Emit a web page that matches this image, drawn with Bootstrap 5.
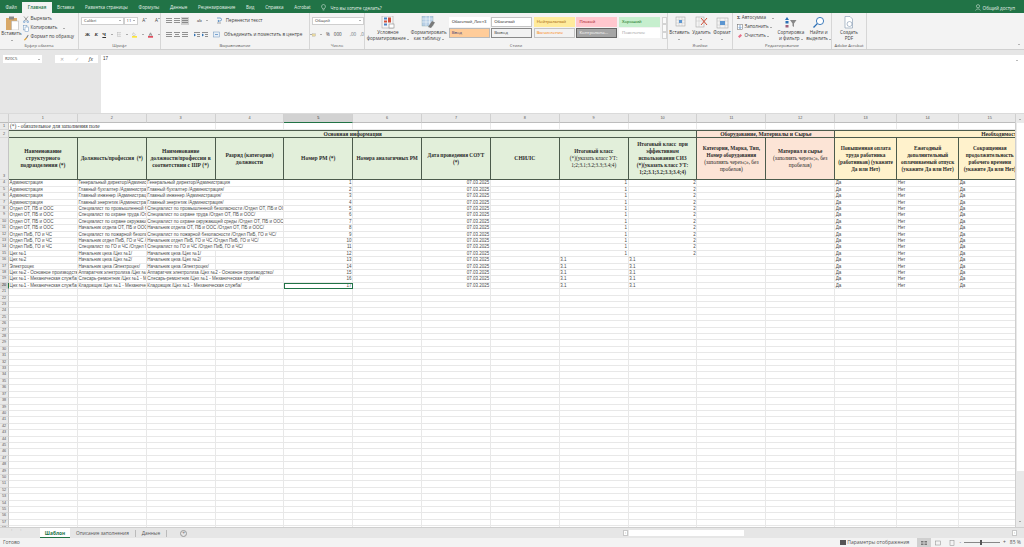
<!DOCTYPE html>
<html lang="ru">
<head>
<meta charset="utf-8">
<title>Excel</title>
<link href="https://cdn.jsdelivr.net/npm/bootstrap@5.3.0/dist/css/bootstrap.min.css" rel="stylesheet">
<style>
html,body{margin:0;height:100%;overflow:hidden;background:#e6e6e6}
body{font-family:"Open Sans","Noto Sans",sans-serif;font-size:4.6px;line-height:1.2;color:#3c3c3c}
.xl-app{width:1024px;height:547px;overflow:hidden}
.xl-top{height:13px;background:#217346;color:#e8f2ec;padding-top:2px}
.xl-tab{padding:0 5.4px;height:11px;line-height:10px;font-size:4.5px;white-space:nowrap}
.xl-tab.on{background:#f3f3f3;color:#217346;font-weight:600}
.xl-share{margin-left:auto;margin-right:9px;line-height:10px;gap:2px}
.xl-rib{height:37px;background:#f3f3f3;border-bottom:1px solid #d0d0d0}
.rg{flex:none;border-right:1px solid #d6d6d6;display:flex;flex-direction:column;height:36px}
.rg-b{flex:1;display:flex;min-height:0}
.rg-l{height:6px;line-height:6px;text-align:center;font-size:4.2px;color:#555;white-space:nowrap}
.w1{width:79px}.w2{width:82px}.w3{width:149px}.w4{width:55px}.w5{width:303px}.w6{width:65px}.w7{width:99px}.w8{width:35px}
.bigb{display:flex;flex-direction:column;align-items:center;text-align:center;line-height:6.4px;white-space:nowrap;padding-top:3px}
.bigb svg{flex:none}
.paste-b{width:23px}.cf-b{width:46px}.ft-b{width:36px}
.lcol{padding-top:1.5px}.lcol2{padding-top:.5px;padding-left:4px}
.ln{height:9px;display:flex;align-items:center;gap:1.5px;white-space:nowrap}
.ca{display:inline-block;width:0;height:0;border-left:1.2px solid transparent;border-right:1.2px solid transparent;border-top:1.6px solid #666;flex:none;vertical-align:middle}
.cu{display:inline-block;width:0;height:0;border-left:1.5px solid transparent;border-right:1.5px solid transparent;border-bottom:1.8px solid #777;flex:none}
.selbox{background:#fff;border:1px solid #cfcfcf;height:8px;display:flex;align-items:center;padding:0 2px;justify-content:space-between;font-size:4.2px}
.b-ico{font-family:"Liberation Serif",serif;font-weight:700;font-size:5px;color:#333}
.fnt1{width:44px}.fnt2{width:15px}
.sw{width:8px;height:8px;flex:none}
.sw.hl{background:#cfcfcf}
.cgrp{padding:3px 0 0 2px;flex-direction:column}
.rw{height:9px;display:flex;align-items:center;white-space:nowrap}
.rw2{margin-top:5px}
.sp6{gap:4.5px}
.gal{display:grid;grid-template-columns:repeat(5,41px);grid-auto-rows:10px;column-gap:1.6px;row-gap:1px;margin:4px 0 0 2px}
.gs{display:flex;align-items:center;padding-left:2px;font-size:4.3px;white-space:nowrap;overflow:hidden;border:1px solid transparent}
.gs0{background:#fff;color:#222}.gs1{background:#fff;border-color:#c4c4c4;color:#222}
.gs2{background:#ffeb9c;color:#9c5700}.gs3{background:#ffc7ce;color:#9c0006}.gs4{background:#c6efce;color:#006100}
.gs5{background:#ffcc99;color:#3f3f76;border-color:#b9b9b9}.gs6{background:#f2f2f2;color:#3f3f3f;border-color:#888}
.gs7{background:#f2f2f2;color:#fa7d00;border-color:#c4c4c4}.gs8{background:#a5a5a5;color:#fff;border-color:#666}
.gs9{background:#fff;color:#999}
.gal-sc{width:5px;margin:4px 0 0 2px;height:22px;display:flex;flex-direction:column}
.gal-sc i{flex:1;border:1px solid #d4d4d4;background:#fafafa;display:block}
.xl-fx{height:63px;background:#e6e6e6;padding-top:5px}
.nm{width:39px;height:8px;margin-left:3px;background:#fff;display:flex;justify-content:space-between;align-items:center;padding:0 2px;font-size:4.2px}
.fxb{width:43px;height:8px;margin-left:13px;background:#fff;display:flex;justify-content:space-around;align-items:center;color:#aaa;font-size:5px}
.fxi{flex:1;margin-left:3px;height:58px;background:#fff;padding:1px 2px;font-family:"Liberation Sans",sans-serif;font-size:4.5px;display:flex;justify-content:space-between;color:#333}
.xl-sheet{height:414px;background:#fff;overflow:hidden;border-top:1px solid #dadada}
.xl-clip{width:1015px;height:413px;overflow:hidden}
.xl-t.table{width:1021.2px;table-layout:fixed;border-collapse:separate;border-spacing:0;margin:0}
.xl-t.table>:not(caption)>*>*{padding:0 .6px;border:0;border-right:1px solid #e8e8e8;border-bottom:1px solid #e8e8e8;box-shadow:none;font-family:"Liberation Sans",sans-serif;font-size:4.5px;font-weight:400;line-height:5.4px;color:#4a4a4a;white-space:nowrap;overflow:hidden;background:#fff;vertical-align:bottom;height:6.42px}
.xl-t.table>:not(caption)>tr>.ch{background:#e9e9e9;text-align:center;color:#555;height:9.3px;line-height:8px;font-size:3.8px;border-right:1px solid #d0d0d0;border-bottom:1px solid #bdbdbd;vertical-align:middle}
.xl-t.table>:not(caption)>tr>.ch.act{background:#d2d2d2;border-bottom:1px solid #217346;color:#222}
.xl-t.table>:not(caption)>tr>.rh{background:#e9e9e9;text-align:center;padding:0;color:#555;font-size:3.8px;border-right:1px solid #c4c4c4;border-bottom:1px solid #d8d8d8}
.xl-t.table>:not(caption)>tr>.rh.act{background:#d2d2d2;border-right:1px solid #217346;color:#222}
.xl-t.table>:not(caption)>tr>.r{text-align:right}
.xl-t.table>:not(caption)>tr>.sel{outline:1px solid #217346;outline-offset:-1px}
.xl-t.table>:not(caption)>tr>.nt{font-family:"Liberation Serif",serif;font-size:5.4px;line-height:6px;color:#333;text-decoration:underline;padding-left:1px;height:6.2px}
.xl-t.table>:not(caption)>tr>.hd{font-family:"Liberation Serif",serif;font-weight:700;font-size:5.6px;line-height:7px;color:#2b2b2b;text-align:center;vertical-align:middle;border-right:1px solid #4c5b4c;border-bottom:1px solid #4c5b4c;padding:0}
.xl-t.table>:not(caption)>tr>.hd1{height:7.4px;line-height:6px;border-top:1px solid #4c5b4c}
.xl-t.table>:not(caption)>tr>.hd3{height:42px}
.xl-t.table>:not(caption)>tr>.hds{font-size:5.3px}
.xl-t.table>:not(caption)>tr>.grn{background:#e2efda}
.xl-t.table>:not(caption)>tr>.pnk{background:#fce4d6}
.xl-t.table>:not(caption)>tr>.ylw{background:#fff2cc}
.xl-t.table>:not(caption)>tr>.lft{text-align:left;padding-left:146px}
.nrm{font-weight:400;color:#222}
.cw0{width:9px}.cw1{width:68.85px}.cw2{width:62px}.cw3{width:62.2px}
.xl-vs{width:9px;height:413px;background:#e9e9e9;border-left:1px solid #cfcfcf;display:flex;flex-direction:column;align-items:center;justify-content:space-between;padding:5px 0}
.xl-vs i{display:block;width:7px;flex:1;margin:3px 0;background:linear-gradient(#fff 0 88%,#e9e9e9 88%)}
.xl-tabs{height:11px;background:#e6e6e6;border-top:1px solid #cfcfcf}
.st-nav{width:40px;gap:8px;padding-left:11px;color:#aaa;font-size:4px}
.st{padding:0 6px;line-height:10px;white-space:nowrap;font-size:4.8px;color:#555;border-right:1px solid #bbb;height:7px;margin-top:1.5px;display:flex;align-items:center}
.st.on{background:#fff;color:#217346;font-weight:700;border:0;border-bottom:1.5px solid #217346;height:10px;margin:0;width:30px;padding:0;justify-content:center}
.st-add{margin-left:13px;width:7px;height:7px;border:1px solid #999;border-radius:50%;line-height:4.4px;text-align:center;color:#777;margin-top:1.5px;font-size:5px}
.hs{margin-left:auto;width:401px;padding:1.5px 7px 0 0;gap:1px;font-size:3.5px;color:#666}
.hs u{display:block;width:5px;height:6px;background:#fff;border:1px solid #c8c8c8;text-align:center;line-height:4px;text-decoration:none;flex:none}
.hs b{display:block;width:115px;height:6px;background:#fff;flex:none}
.hs em{flex:1}
.xl-status{height:9px;background:#f3f3f3;line-height:9px;font-size:5px;padding:0 3px;color:#555}
.vw{width:14px;height:9px;display:flex;align-items:center;justify-content:center}
.vw.on{background:#d0d0d0}
.zbar{width:36px;height:1px;background:#888;position:relative;margin:0 3px}
.zthumb{position:absolute;left:16px;top:-2px;width:2px;height:5px;background:#555}
.st-par{margin:0 8px 0 1px}
.st-pct{margin-left:4px}
.fnd{margin-left:2px}
</style>
</head>
<body>
<svg width="0" height="0" class="d-none">
 <symbol id="al" viewBox="0 0 8 8"><path d="M1 1.500h6M1 3.500h6M1 5.500h6" stroke="#777" stroke-width=".8"/></symbol>
 <symbol id="ac" viewBox="0 0 8 8"><path d="M1 1.500h6M2 3.500h4M1 5.500h6" stroke="#777" stroke-width=".8"/></symbol>
 <symbol id="ind" viewBox="0 0 8 8"><path d="M1 1.500h6M4 3.500h3M4 5.500h3" stroke="#777" stroke-width=".8"/><path d="M1 2.500l2 1.500-2 1.500z" fill="#2b6fb5"/></symbol>
</svg>
<div class="xl-app d-flex flex-column">
 <div class="xl-top d-flex">
  <div class="nav flex-nowrap">
   <span class="xl-tab">Файл</span><span class="xl-tab on">Главная</span><span class="xl-tab">Вставка</span><span class="xl-tab">Разметка страницы</span><span class="xl-tab">Формулы</span><span class="xl-tab">Данные</span><span class="xl-tab">Рецензирование</span><span class="xl-tab">Вид</span><span class="xl-tab">Справка</span><span class="xl-tab">Acrobat</span>
   <span class="xl-tab d-flex align-items-center gap-1"><svg width="5" height="7" viewBox="0 0 5 7"><path d="M2.500.5a2 2 0 0 0-1 3.700V5h2v-.8a2 2 0 0 0-1-3.700zM1.700 6h1.600" fill="none" stroke="#e8f2ec" stroke-width=".5"/></svg>Что вы хотите сделать?</span>
  </div>
  <div class="xl-share d-flex align-items-center"><svg width="6" height="7" viewBox="0 0 6 7"><circle cx="3" cy="2.200" r="1.600" fill="none" stroke="#e8f2ec" stroke-width=".5"/><path d="M.6 6.500c.3-2 4.500-2 4.800 0" fill="none" stroke="#e8f2ec" stroke-width=".5"/></svg>Общий доступ</div>
 </div>

 <div class="xl-rib d-flex">
  <div class="rg w1">
   <div class="rg-b">
    <div class="bigb paste-b">
     <svg width="22" height="14" viewBox="0 0 22 14"><rect x="5" y="2" width="11" height="12" fill="#d8a868"/><rect x="8" y=".5" width="5" height="3" fill="#8a8a8a"/><rect x="10.500" y="5" width="7" height="9" fill="#fff" stroke="#aaa" stroke-width=".5"/></svg>
     <span>Вставить</span><span class="ca mt-1"></span>
    </div>
    <div class="d-flex flex-column lcol ms-0">
     <div class="ln"><svg width="6" height="7" viewBox="0 0 6 7"><path d="M1 .5l3.500 4.500M5 .5L1.500 5" stroke="#666" stroke-width=".6"/><circle cx="1.200" cy="5.700" r=".9" fill="none" stroke="#3d7cc0" stroke-width=".5"/><circle cx="4.800" cy="5.700" r=".9" fill="none" stroke="#3d7cc0" stroke-width=".5"/></svg>Вырезать</div>
     <div class="ln"><svg width="6" height="7" viewBox="0 0 6 7"><rect x=".5" y=".5" width="3.400" height="4.400" fill="#fff" stroke="#6b93bd" stroke-width=".5"/><rect x="2" y="2" width="3.400" height="4.400" fill="#fff" stroke="#6b93bd" stroke-width=".5"/></svg>Копировать <span class="ca ms-1"></span></div>
     <div class="ln"><svg width="6" height="7" viewBox="0 0 6 7"><path d="M.8 6l2.200-2.400 1 1L1.800 6.600z" fill="#e0a030"/><path d="M3 3.400l2-2.600.6.5-1.600 2.900z" fill="#777"/></svg>Формат по образцу</div>
    </div>
   </div>
   <div class="rg-l">Буфер обмена</div>
  </div>

  <div class="rg w2">
   <div class="rg-b cgrp">
    <div class="rw">
     <div class="selbox fnt1"><span>Calibri</span><span class="ca"></span></div>
     <div class="selbox fnt2"><span>11</span><span class="ca"></span></div>
     <span class="ms-1">A<span class="cu ms-0 align-top"></span></span><span class="ms-1 ps-1">A<span class="ca align-top"></span></span>
    </div>
    <div class="rw rw2 sp6 ps-1">
     <span class="b-ico">Ж</span><span class="b-ico fst-italic">К</span><span class="b-ico text-decoration-underline">Ч</span><span class="ca"></span>
     <svg width="7" height="7" viewBox="0 0 7 7"><rect x=".5" y=".5" width="6" height="6" fill="none" stroke="#aaa" stroke-width=".6"/><path d="M3.500.5v6M.5 3.500h6" stroke="#aaa" stroke-width=".4"/></svg><span class="ca"></span>
     <svg width="8" height="8" viewBox="0 0 8 8"><path d="M2 .5l3.500 3-2.500 2.500L1 3z" fill="#f6f6f6" stroke="#777" stroke-width=".5"/><rect y="6" width="8" height="2" fill="#ffe100"/></svg><span class="ca"></span>
     <svg width="8" height="8" viewBox="0 0 8 8"><path d="M1.500 5.500L4 .5l2.500 5M2.500 3.800h3" fill="none" stroke="#555" stroke-width=".8"/><rect y="6" width="8" height="2" fill="#d8132a"/></svg><span class="ca"></span>
    </div>
   </div>
   <div class="rg-l">Шрифт</div>
  </div>

  <div class="rg w3">
   <div class="rg-b cgrp ps-1">
    <div class="rw">
     <svg class="sw"><use href="#al"/></svg><svg class="sw"><use href="#al"/></svg><svg class="sw hl"><use href="#al"/></svg>
     <span class="ms-2 b-ico fw-normal">ab</span><span class="ca ms-1"></span>
     <span class="ms-2 d-flex align-items-center gap-1"><svg width="6" height="7" viewBox="0 0 6 7"><path d="M1 1h3a1.500 1.500 0 0 1 0 3H2M3 3L1.800 4 3 5" fill="none" stroke="#2b6fb5" stroke-width=".6"/><path d="M1 6h4" stroke="#777" stroke-width=".6"/></svg>Перенести текст</span>
    </div>
    <div class="rw rw2">
     <svg class="sw"><use href="#al"/></svg><svg class="sw"><use href="#ac"/></svg><svg class="sw"><use href="#al"/></svg>
     <svg class="sw ms-1"><use href="#ind"/></svg><svg class="sw"><use href="#ind"/></svg>
     <span class="ms-1 d-flex align-items-center gap-1"><svg width="7" height="7" viewBox="0 0 7 7"><rect x=".5" y="1" width="6" height="5" fill="#e9f0f7" stroke="#6b93bd" stroke-width=".5"/><path d="M2 3.500h3" stroke="#2b6fb5" stroke-width=".6"/></svg>Объединить и поместить в центре<span class="ca ms-1"></span></span>
    </div>
   </div>
   <div class="rg-l">Выравнивание</div>
  </div>

  <div class="rg w4">
   <div class="rg-b cgrp">
    <div class="rw"><div class="selbox flex-grow-1 me-0"><span>Общий</span><span class="ca"></span></div></div>
    <div class="rw rw2 gap-1"><svg width="7" height="6" viewBox="0 0 7 6"><rect y="1" width="6" height="4" fill="#e8d8a0" stroke="#888" stroke-width=".4"/></svg><span class="ca"></span><span>%</span><span>000</span><span class="ms-1 text-secondary">,00</span><span class="text-secondary">,0</span></div>
   </div>
   <div class="rg-l">Число</div>
  </div>

  <div class="rg w5">
   <div class="rg-b">
    <div class="bigb cf-b">
     <svg width="15" height="13" viewBox="0 0 15 13"><rect x="2" y="0" width="11" height="12" fill="#f6f6f6" stroke="#9a9a9a" stroke-width=".5"/><rect x="4" y="1.500" width="3" height="2" fill="#4a80c2"/><rect x="4" y="4.500" width="3" height="2" fill="#d0503a"/><rect x="4" y="7.500" width="3" height="2" fill="#4a80c2"/><rect x="8" y="1.500" width="3" height="5" fill="#d0503a"/><rect x="9" y="8" width="5" height="4" fill="#fff" stroke="#777" stroke-width=".5"/></svg>
     <span>Условное</span><span>форматирование <span class="ca"></span></span>
    </div>
    <div class="bigb ft-b">
     <svg width="15" height="13" viewBox="0 0 15 13"><rect x="1" y="0" width="11" height="10" fill="#b8cfe6" stroke="#8aa" stroke-width=".4"/><path d="M1 3h11M1 6h11M5 0v10M8.500 0v10" stroke="#fff" stroke-width=".5"/><path d="M7 11l4-6 3 1.500-4 5.500z" fill="#7a7a7a"/></svg>
     <span>Форматировать</span><span>как таблицу <span class="ca"></span></span>
    </div>
    <div class="gal">
     <div class="gs gs0">Обычный_Лист3</div><div class="gs gs1">Обычный</div><div class="gs gs2">Нейтральный</div><div class="gs gs3">Плохой</div><div class="gs gs4">Хороший</div>
     <div class="gs gs5">Ввод</div><div class="gs gs6">Вывод</div><div class="gs gs7">Вычисление</div><div class="gs gs8">Контрольна...</div><div class="gs gs9">Пояснение</div>
    </div>
    <div class="gal-sc"><i></i><i></i><i></i></div>
   </div>
   <div class="rg-l">Стили</div>
  </div>

  <div class="rg w6">
   <div class="rg-b justify-content-around">
    <div class="bigb"><svg width="13" height="13" viewBox="0 0 13 13"><rect x="3" y="1" width="9" height="9" fill="#f4f4f4" stroke="#9a9a9a" stroke-width=".5"/><path d="M6 1v9M9 1v9M3 4h9M3 7h9" stroke="#bbb" stroke-width=".4"/><rect x="6" y="4" width="3" height="3" fill="#5b95d0"/></svg><span>Вставить</span><span class="ca mt-1"></span></div>
    <div class="bigb"><svg width="13" height="13" viewBox="0 0 13 13"><rect x="1" y="1" width="8" height="10" fill="#f4f4f4" stroke="#9a9a9a" stroke-width=".5"/><path d="M4 1v10M1 5h8" stroke="#bbb" stroke-width=".4"/><path d="M6 2l6 7M12 2L6 9" stroke="#d0503a" stroke-width="1"/></svg><span>Удалить</span><span class="ca mt-1"></span></div>
    <div class="bigb"><svg width="13" height="13" viewBox="0 0 13 13"><rect x="1" y="2" width="11" height="10" fill="#f4f4f4" stroke="#9a9a9a" stroke-width=".5"/><path d="M4 2v10M9 2v10M1 5h11M1 9h11" stroke="#bbb" stroke-width=".4"/><rect x="4" y="5" width="5" height="4" fill="#5b95d0"/></svg><span>Формат</span><span class="ca mt-1"></span></div>
   </div>
   <div class="rg-l">Ячейки</div>
  </div>

  <div class="rg w7">
   <div class="rg-b">
    <div class="d-flex flex-column lcol2">
     <div class="ln"><span class="b-ico fw-bold">Σ</span>Автосумма <span class="ca ms-1"></span></div>
     <div class="ln"><svg width="6" height="6" viewBox="0 0 6 6"><rect x=".5" y=".5" width="5" height="5" fill="#fff" stroke="#666" stroke-width=".5"/><path d="M3 1v3.500M1.700 3.200L3 4.500l1.300-1.300" stroke="#2b6fb5" stroke-width=".6" fill="none"/></svg>Заполнить <span class="ca"></span></div>
     <div class="ln"><svg width="6" height="6" viewBox="0 0 6 6"><path d="M1 3.500L3.500 1l1.500 1.500L2.500 5z" fill="#e8708a"/></svg>Очистить <span class="ca"></span></div>
    </div>
    <div class="bigb ms-1"><svg width="13" height="13" viewBox="0 0 13 13"><path d="M3 1l2 3H1z" fill="#2b6fb5"/><rect x="1.500" y="5" width="3" height="2.500" fill="#2b6fb5"/><rect x="1.500" y="9" width="3" height="2.500" fill="#a0607a"/><path d="M6 4h6.500L10 7.500V11l-1.500-1V7.500z" fill="#888"/></svg><span>Сортировка</span><span>и фильтр <span class="ca"></span></span></div>
    <div class="bigb fnd"><svg width="13" height="13" viewBox="0 0 13 13"><circle cx="8" cy="5" r="3.600" fill="#fff" stroke="#2b6fb5" stroke-width=".9"/><path d="M5.300 7.600L1.500 11.500" stroke="#2b6fb5" stroke-width="1.300"/></svg><span>Найти и</span><span>выделить <span class="ca"></span></span></div>
   </div>
   <div class="rg-l">Редактирование</div>
  </div>

  <div class="rg w8">
   <div class="rg-b justify-content-center">
    <div class="bigb"><svg width="13" height="13" viewBox="0 0 13 13"><path d="M3 .5h5l2.500 2.500v9H3z" fill="#fff" stroke="#7d93ad" stroke-width=".6"/><circle cx="7.500" cy="8" r="2.500" fill="#fff" stroke="#7d93ad" stroke-width=".6"/></svg><span>Создать</span><span>PDF</span></div>
   </div>
   <div class="rg-l">Adobe Acrobat</div>
  </div>
  <div class="flex-grow-1 d-flex align-items-end justify-content-end pe-1 pb-1"><span class="cu"></span></div>
 </div>

 <div class="xl-fx d-flex">
  <div class="nm"><span>R20C5</span><span class="ca"></span></div>
  <div class="fxb"><span>✕</span><span>✓</span><span class="fst-italic text-dark">fx</span></div>
  <div class="fxi"><span>17</span><span class="pe-1 pt-1"><span class="cu d-block"></span></span></div>
 </div>

 <div class="xl-sheet d-flex">
  <div class="xl-clip">
   <table class="table xl-t">
    <colgroup id="cg"></colgroup>
    <thead>
     <tr id="cols"></tr>
    </thead>
    <tbody id="tb">
     <tr><td class="rh">1</td><td class="nt" colspan="3">(*) - обязательное для заполнения поле</td><td></td><td></td><td></td><td></td><td></td><td></td><td></td><td></td><td></td><td></td><td></td><td></td></tr>
     <tr><td class="rh">2</td><td colspan="10" class="hd hd1 grn">Основная информация</td><td colspan="2" class="hd hd1 pnk">Оборудование, Материалы и Сырье</td><td colspan="3" class="hd hd1 ylw lft">Необходимость</td></tr>
     <tr><td class="rh align-bottom">3</td>
      <th class="hd hd3 grn">Наименование<br>структурного<br>подразделения (*)</th>
      <th class="hd hd3 hds grn">Должность/профессия&nbsp; (*)</th>
      <th class="hd hd3 grn">Наименование<br>должности/профессии в<br>соответствии с ШР (*)</th>
      <th class="hd hd3 grn">Разряд (категория)<br>должности</th>
      <th class="hd hd3 grn">Номер РМ (*)</th>
      <th class="hd hd3 hds grn">Номера аналогичных РМ</th>
      <th class="hd hd3 hds grn">Дата проведения СОУТ<br>(*)</th>
      <th class="hd hd3 grn">СНИЛС</th>
      <th class="hd hd3 hds grn">Итоговый класс<br><span class="nrm">(*)(указать класс УТ:<br>1;2;3.1;3.2;3.3;3.4;4)</span></th>
      <th class="hd hd3 hds grn">Итоговый класс&nbsp; при<br>эффективном<br>использовании СИЗ<br>(*)(указать класс УТ:<br>1;2;3.1;3.2;3.3;3.4;4)</th>
      <th class="hd hd3 hds pnk">Категория, Марка, Тип,<br>Номер оборудования<br><span class="nrm">(заполнять через«;», без<br>пробелов)</span></th>
      <th class="hd hd3 hds pnk">Материал и сырье<br><span class="nrm">(заполнять через«;», без<br>пробелов)</span></th>
      <th class="hd hd3 hds ylw">Повышенная оплата<br>труда работника<br>(работников) (укажите<br>Да или Нет)</th>
      <th class="hd hd3 hds ylw">Ежегодный<br>дополнительный<br>оплачиваемый отпуск<br>(укажите Да или Нет)</th>
      <th class="hd hd3 hds ylw">Сокращенная<br>продолжительность<br>рабочего времени<br>(укажите Да или Нет)</th>
     </tr>
    </tbody>
   </table>
  </div>
  <div class="xl-vs"><span class="cu"></span><i></i><span class="ca"></span></div>
 </div>

 <div class="xl-tabs d-flex">
  <div class="st-nav d-flex"><span>‹</span><span>›</span></div>
  <div class="st on">Шаблон</div><div class="st">Описание заполнения</div><div class="st">Данные</div>
  <div class="st-add">+</div>
  <div class="hs d-flex"><u>‹</u><b></b><em></em><u>›</u></div>
 </div>
 <div class="xl-status d-flex align-items-center">
  <span>Готово</span>
  <div class="ms-auto d-flex align-items-center">
   <svg width="6" height="6" viewBox="0 0 6 6"><rect width="6" height="5" fill="#555"/></svg>
   <span class="st-par">Параметры отображения</span>
   <span class="vw on"><svg width="6" height="6" viewBox="0 0 6 6"><path d="M0 1h2.500v1.500H0zM3.500 1H6v1.500H3.500zM0 3.500h2.500V5H0zM3.500 3.500H6V5H3.500z" fill="#777"/></svg></span>
   <span class="vw"><svg width="6" height="6" viewBox="0 0 6 6"><rect x=".5" y="1" width="5" height="4" fill="none" stroke="#888" stroke-width=".5"/></svg></span>
   <span class="vw"><svg width="6" height="6" viewBox="0 0 6 6"><rect x="1" y=".5" width="4" height="5" fill="none" stroke="#888" stroke-width=".5"/></svg></span>
   <span>-</span><span class="zbar"><span class="zthumb"></span></span><span>+</span><span class="st-pct">85 %</span>
  </div>
 </div>
</div>
<script>
(function(){
 var W=[0,1,1,1,1,1,1,1,1,1,1,1,1,2,2,3];
 var cg=document.getElementById('cg');
 W.forEach(function(n){var c=document.createElement('col');c.className='cw'+n;cg.appendChild(c);});
 var h='<th class="ch"></th>';
 for(var i=1;i<=15;i++)h+='<th class="ch'+(i==5?' act':'')+'">'+i+'</th>';
 document.getElementById('cols').innerHTML=h;
 var dep=['Администрация','Администрация','Администрация','Администрация','Отдел ОТ, ПБ и ООС','Отдел ОТ, ПБ и ООС','Отдел ОТ, ПБ и ООС','Отдел ОТ, ПБ и ООС','Отдел ПиБ, ГО и ЧС','Отдел ПиБ, ГО и ЧС','Отдел ПиБ, ГО и ЧС','Цех №1','Цех №2','Электроцех','Цех №2 - Основное производство','Цех №1 - Механическая служба','Цех №1 - Механическая служба'];
 var pos=['Генеральный директор/Администрация','Главный бухгалтер /Администрация/','Главный инженер /Администрация/','Главный энергетик /Администрация/','Специалист по промышленной безопасности /Отдел ОТ, ПБ и ООС','Специалист по охране труда /Отдел ОТ, ПБ и ООС/','Специалист по охране окружающей среды /Отдел ОТ, ПБ и ООС','Начальник отдела ОТ, ПБ и ООС /Отдел ОТ, ПБ и ООС/','Специалист по пожарной безопасности /Отдел ПиБ, ГО и ЧС/','Начальник отдел ПиБ, ГО и ЧС /Отдел ПиБ, ГО и ЧС/','Специалист по ГО и ЧС /Отдел ПиБ, ГО и ЧС/','Начальник цеха /Цех №1/','Начальник цеха /Цех №2/','Начальник цеха /Электроцех/','Аппаратчик электролиза /Цех №2 - Основное производство/','Слесарь-ремонтник /Цех №1 - Механическая служба/','Кладовщик /Цех №1 - Механическая служба/'];
 var s='';
 for(var r=4;r<=58;r++){
  var k=r-4,a=r==20?' act':'';
  s+='<tr><td class="rh'+a+'">'+r+'</td>';
  if(k<17){
   var wide=pos[k].length>30;
   s+='<td>'+dep[k]+'</td><td>'+pos[k]+'</td><td'+(wide?' colspan="2"':'')+'>'+pos[k]+'</td>'+(wide?'':'<td></td>');
   s+='<td class="r'+(r==20?' sel':'')+'">'+(k+1)+'</td><td></td><td class="r">07.03.2025</td><td></td>';
   if(k<12)s+='<td class="r">1</td><td class="r">2</td>';else s+='<td>3.1</td><td>3.1</td>';
   s+='<td></td><td></td><td>Да</td><td>Нет</td><td>Да</td>';
  }else{
   for(var c=0;c<15;c++)s+='<td></td>';
  }
  s+='</tr>';
 }
 document.getElementById('tb').insertAdjacentHTML('beforeend',s);
})();
</script>
<script src="https://cdn.jsdelivr.net/npm/bootstrap@5.3.0/dist/js/bootstrap.bundle.min.js"></script>
</body>
</html>
